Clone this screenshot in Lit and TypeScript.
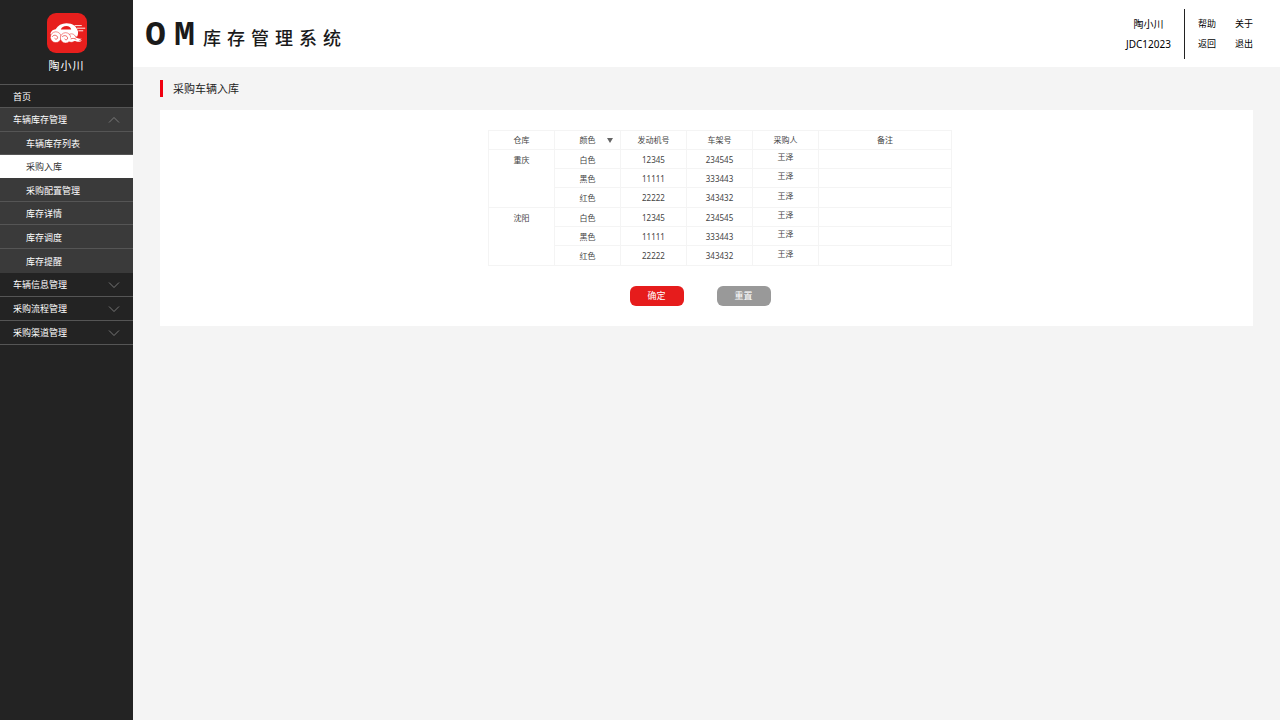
import { LitElement, html, css, svg } from "lit";
import { customElement, state } from "lit/decorators.js";

interface MenuGroup {
  label: string;
  children?: string[];
}

interface StockRow {
  color: string;
  engine: string;
  frame: string;
  buyer: string;
  note: string;
}

const MENU: MenuGroup[] = [
  {
    label: "车辆库存管理",
    children: ["车辆库存列表", "采购入库", "采购配置管理", "库存详情", "库存调度", "库存提醒"],
  },
  { label: "车辆信息管理" },
  { label: "采购流程管理" },
  { label: "采购渠道管理" },
];

const rows = (): StockRow[] => [
  { color: "白色", engine: "12345", frame: "234545", buyer: "王泽", note: "" },
  { color: "黑色", engine: "11111", frame: "333443", buyer: "王泽", note: "" },
  { color: "红色", engine: "22222", frame: "343432", buyer: "王泽", note: "" },
];

const WAREHOUSES = [
  { name: "重庆", rows: rows() },
  { name: "沈阳", rows: rows() },
];

const logo = svg`
  <rect width="40" height="40" rx="9" fill="#e71f1d"/>
  <path fill="#fff" fill-rule="evenodd" d="M3.400 20.500C4 18 6 16.600 8.600 16.200C11 12.600 14.600 10.300 19.400 10.300C25.800 10.300 30 13.600 31 18.600C31.200 20.400 31 22 30.200 23.600L5 24.500ZM13.800 16.600H24.200C23.800 14.400 22 13.100 19.400 13.100C16.600 13.100 14.600 14.400 13.800 16.600Z"/>
  <g fill="#fff" stroke="#e71f1d" stroke-width=".5">
    <circle cx="24.500" cy="25" r="4.200"/>
    <circle cx="8.800" cy="24.200" r="5.400"/>
    <circle cx="18.600" cy="24.900" r="5.200"/>
  </g>
  <path fill="#fff" d="M22 25.500C25 23.600 28 23.800 30 25C31.600 25.800 33 26 34.600 25.600C34 26.800 33 27.200 31.600 27.400C32.800 27.800 34 27.600 35 27.200C33.800 28.800 31.600 29.200 29.400 28.400C26.600 27.600 24.400 28.400 22 28.600Z"/>
  <path fill="none" stroke="#e71f1d" stroke-width=".7" stroke-linecap="round" d="M5.400 23.400c1.200-2 5-1.400 5.200 1.200c0 1.600-2 2.200-2.800 1M15.400 23.600c1.400-1.800 5-1.200 5.200 1.600c0 1.600-2 2.200-2.800 1M24 25.800c1.800-.8 3.600-.4 5 .4"/>
  <path stroke="#fff" stroke-width=".9" stroke-linecap="round" d="M28 12.600h6.400M30.400 15.200h7.400M31.800 17.800h4"/>
`;

@customElement("app-root")
export class AppRoot extends LitElement {
  @state() private active = "采购入库";
  @state() private open = "车辆库存管理";

  static styles = css`
    :host {
      display: grid;
      grid-template-columns: 133px minmax(0, 1fr);
      min-height: 100vh;
      background: #f4f4f4;
      color: #1a1a1a;
      font: 9px/12px "Noto Sans", "Noto Sans CJK SC", sans-serif;
    }
    * {
      box-sizing: border-box;
    }
    ul,
    h1,
    h2,
    p {
      margin: 0;
      padding: 0;
      list-style: none;
      font-weight: 400;
    }
    a {
      color: inherit;
      text-decoration: none;
    }
    button {
      font: inherit;
      border: 0;
      cursor: pointer;
    }

    .sidebar {
      background: #232323;
      color: #fff;
    }
    .brand {
      display: flex;
      flex-direction: column;
      align-items: center;
      gap: 5px;
      padding: 13px 0 10px;
      border-bottom: 1px solid #555;
      font-size: 11px;
      line-height: 16px;
      letter-spacing: 1px;
    }
    .logo {
      width: 40px;
      height: 40px;
    }
    .item {
      display: flex;
      align-items: center;
      justify-content: space-between;
      width: 100%;
      height: 24px;
      padding: 1px 13px 0;
      border-bottom: 1px solid #555;
      background: transparent;
      color: #fff;
      text-align: left;
    }
    .home {
      height: 23px;
    }
    .item.open {
      background: #3a3a3a;
    }
    .chevron {
      width: 12px;
      height: 8px;
      fill: none;
      stroke: #8c8c8c;
      stroke-width: 0.8;
    }
    .open .chevron {
      transform: rotate(180deg);
    }
    .sub {
      background: #3a3a3a;
    }
    .sub a {
      display: flex;
      align-items: center;
      height: 23px;
      padding: 2px 0 0 26px;
      border-bottom: 1px solid #555;
    }
    .sub li:nth-child(3n) a,
    .sub li:nth-child(5) a {
      height: 24px;
    }
    .sub li:last-child a {
      border-color: transparent;
    }
    .sub a.active {
      background: #fff;
      border-color: #fff;
      color: #333;
    }

    .topbar {
      display: flex;
      align-items: center;
      justify-content: space-between;
      height: 67px;
      padding: 0 27px 0 12px;
      background: #fff;
    }
    .system {
      display: flex;
      align-items: baseline;
      font-size: 18px;
      line-height: 40px;
      font-weight: 500;
      letter-spacing: 6px;
      padding-top: 6px;
    }
    .mark {
      font: 700 35px/40px "Liberation Mono", monospace;
      letter-spacing: 8px;
    }
    .account {
      display: flex;
      align-items: center;
      color: #000;
    }
    .user {
      display: grid;
      gap: 8px;
      padding-right: 13px;
      font-size: 10px;
      text-align: center;
    }
    .links {
      display: grid;
      grid-template-columns: auto auto;
      gap: 8px 19px;
      padding: 9px 0 9px 13px;
      border-left: 1px solid #222;
    }

    .page {
      padding: 13px 27px 27px;
    }
    .title {
      padding-left: 10px;
      border-left: 3px solid #f00010;
      font-size: 11px;
      line-height: 17px;
      color: #222;
    }
    .panel {
      margin-top: 13px;
      padding: 20px 0;
      background: #fff;
    }
    .table-wrap {
      display: flex;
      justify-content: center;
      padding-left: 27px;
    }
    table {
      border-collapse: collapse;
      table-layout: fixed;
      width: 464px;
      font-size: 8px;
      line-height: 12px;
      color: #444;
    }
    th,
    td {
      height: 19px;
      padding: 2px 0 0;
      border: 1px solid #f4f4f4;
      font-weight: 400;
      text-align: center;
    }
    thead th {
      padding: 0;
    }
    .last td {
      height: 20px;
      padding-top: 0;
    }
    td.buyer {
      padding: 0 0 4px;
    }
    th.house {
      vertical-align: top;
      padding-top: 4px;
    }
    .narrow {
      width: 66px;
    }
    .sort {
      display: grid;
      grid-template-columns: 1fr auto 1fr;
      align-items: center;
      width: 100%;
      padding: 0;
      background: transparent;
      color: inherit;
    }
    .sort span {
      grid-column: 2;
    }
    .sort svg {
      width: 6px;
      height: 5px;
      margin-right: 7px;
      justify-self: end;
      fill: #666;
    }
    .actions {
      display: flex;
      justify-content: center;
      gap: 33px;
      margin-top: 20px;
      padding-right: 13px;
    }
    .btn {
      width: 54px;
      height: 20px;
      padding: 0;
      border-radius: 6px;
      color: #fff;
      background: #999;
    }
    .btn.primary {
      background: #e61c1c;
    }
  `;

  private chevron() {
    return html`<svg class="chevron" viewBox="0 0 12 8" aria-hidden="true"><path d="M1 1.500L6 6.500L11 1.500" /></svg>`;
  }

  private toggle(label: string) {
    this.open = this.open === label ? "" : label;
  }

  private select(e: Event, label: string) {
    e.preventDefault();
    this.active = label;
  }

  private renderGroup(g: MenuGroup) {
    const open = this.open === g.label;
    return html`<li>
      <button class="item ${open ? "open" : ""}" aria-expanded=${open} @click=${() => this.toggle(g.label)}>
        <span>${g.label}</span>${this.chevron()}
      </button>
      ${open && g.children
        ? html`<ul class="sub">
            ${g.children.map(
              (c) => html`<li>
                <a href="#" class=${c === this.active ? "active" : ""} @click=${(e: Event) => this.select(e, c)}>${c}</a>
              </li>`
            )}
          </ul>`
        : ""}
    </li>`;
  }

  render() {
    return html`
      <nav class="sidebar">
        <div class="brand">
          <svg class="logo" viewBox="0 0 40 40" aria-hidden="true">${logo}</svg>
          <span>陶小川</span>
        </div>
        <ul>
          <li><a class="item home" href="#">首页</a></li>
          ${MENU.map((g) => this.renderGroup(g))}
        </ul>
      </nav>
      <div>
        <header class="topbar">
          <h1 class="system"><span class="mark">OM</span><span>库存管理系统</span></h1>
          <div class="account">
            <div class="user">
              <span>陶小川</span>
              <span>JDC12023</span>
            </div>
            <div class="links">
              <a href="#">帮助</a><a href="#">关于</a>
              <a href="#">返回</a><a href="#">退出</a>
            </div>
          </div>
        </header>
        <main class="page">
          <h2 class="title">采购车辆入库</h2>
          <section class="panel">
            <div class="table-wrap">
              <table>
                <thead>
                  <tr>
                    <th class="narrow">仓库</th>
                    <th class="narrow">
                      <button class="sort">
                        <span>颜色</span>
                        <svg viewBox="0 0 6 5" aria-hidden="true"><path d="M0 0H6L3 5Z" /></svg>
                      </button>
                    </th>
                    <th class="narrow">发动机号</th>
                    <th class="narrow">车架号</th>
                    <th class="narrow">采购人</th>
                    <th>备注</th>
                  </tr>
                </thead>
                <tbody>
                  ${WAREHOUSES.map((w) =>
                    w.rows.map(
                      (r, i) => html`<tr class=${i === w.rows.length - 1 ? "last" : ""}>
                        ${i === 0 ? html`<th class="house" scope="rowgroup" rowspan=${w.rows.length}>${w.name}</th>` : ""}
                        <td>${r.color}</td>
                        <td>${r.engine}</td>
                        <td>${r.frame}</td>
                        <td class="buyer">${r.buyer}</td>
                        <td>${r.note}</td>
                      </tr>`
                    )
                  )}
                </tbody>
              </table>
            </div>
            <div class="actions">
              <button class="btn primary">确定</button>
              <button class="btn">重置</button>
            </div>
          </section>
        </main>
      </div>
    `;
  }
}
